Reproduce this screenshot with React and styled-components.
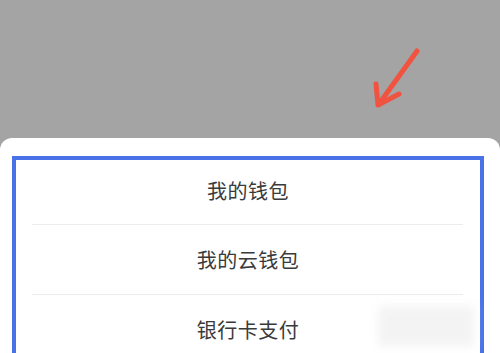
import styled, { createGlobalStyle } from 'styled-components';

const Global = createGlobalStyle`
  html, body {
    margin: 0;
    padding: 0;
    background: #a4a4a4;
  }
  body {
    font-family: "Noto Sans CJK SC", "Noto Sans", sans-serif;
  }
`;

const Page = styled.div`
  position: relative;
  width: 500px;
  height: 353px;
  overflow: hidden;
  background: #a4a4a4;
  display: flex;
  flex-direction: column;
`;

const Backdrop = styled.div`
  position: relative;
  height: 138px;
  flex-shrink: 0;
`;

const Arrow = styled.svg`
  position: absolute;
  left: 368px;
  top: 44px;
`;

const Sheet = styled.div`
  flex: 1;
  background: #fff;
  border-radius: 12px 12px 0 0;
  padding: 18px 16px 0 12px;
`;

const Highlight = styled.div`
  border: 4px solid #4a72e8;
  border-bottom: none;
  height: 100%;
  box-sizing: border-box;
`;

const Row = styled.div`
  height: ${p => (p.$first ? 64 : 69)}px;
  padding-bottom: ${p => (p.$first ? 4 : 0)}px;
  box-sizing: border-box;
  display: flex;
  align-items: center;
  justify-content: center;
  font-size: 20px;
  color: #3a3a3a;
  letter-spacing: 0.5px;
`;

const Divider = styled.div`
  height: 1px;
  margin: 0 17px 0 16px;
  background: #ececec;
`;

const Watermark = styled.div`
  position: absolute;
  left: 378px;
  top: 306px;
  width: 96px;
  height: 40px;
  background: #f1f1f1;
  filter: blur(5px);
  opacity: 0.8;
`;

const items = ['我的钱包', '我的云钱包', '银行卡支付'];

export default function App() {
  return (
    <Page>
      <Global />
      <Backdrop>
        <Arrow width="60" height="70" viewBox="0 0 60 70">
          <g stroke="#f0533f" strokeWidth="5" strokeLinecap="round" strokeLinejoin="round" fill="none">
            <path d="M49 7 C40 20 25 40 11 60" />
            <path d="M8 40 L10 61 L31 50" />
          </g>
        </Arrow>
      </Backdrop>
      <Sheet>
        <Highlight>
          {items.map((label, i) => (
            <div key={label}>
              {i > 0 && <Divider />}
              <Row $first={i === 0}>{label}</Row>
            </div>
          ))}
        </Highlight>
      </Sheet>
      <Watermark />
    </Page>
  );
}
